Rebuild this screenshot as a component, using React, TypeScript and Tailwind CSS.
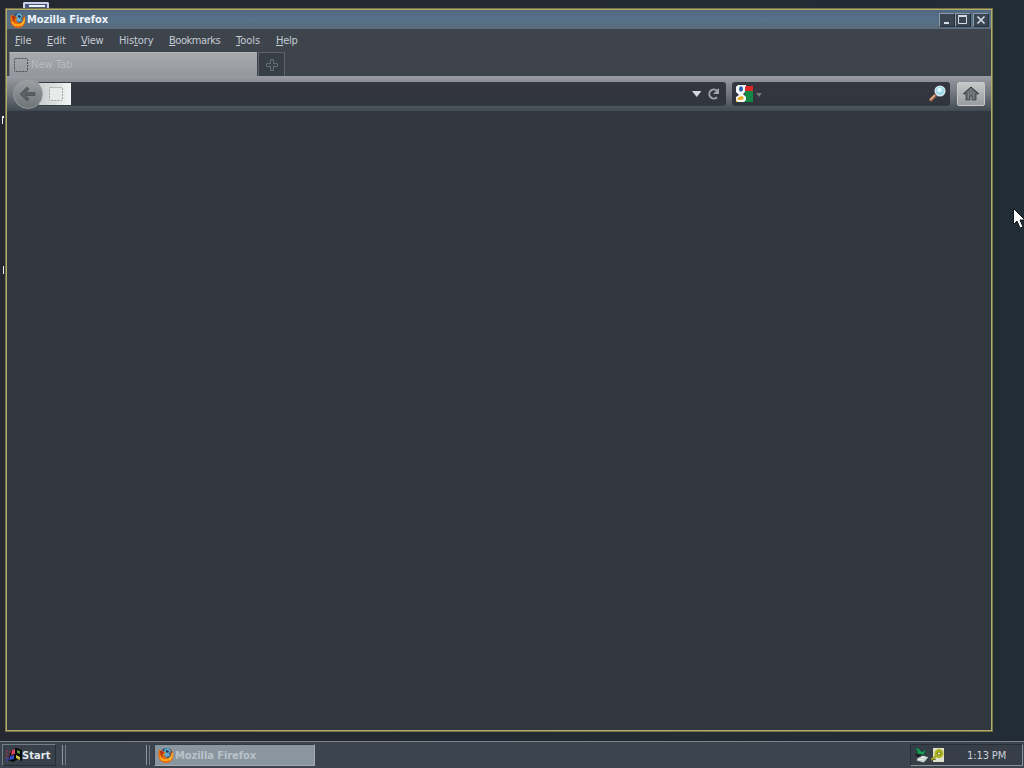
import type { ReactNode } from "react";

const MENUS = [
  { label: "File", width: "w-[32px]", spacing: "tracking-[0px]" },
  { label: "Edit", width: "w-[34px]", spacing: "tracking-[-0.1px]" },
  { label: "View", width: "w-[38px]", spacing: "tracking-[-0.3px]" },
  { label: "History", width: "w-[50px]", spacing: "tracking-[-0.1px]", key: 3 },
  { label: "Bookmarks", width: "w-[67px]", spacing: "tracking-[-0.45px]" },
  { label: "Tools", width: "w-[40px]", spacing: "tracking-[0px]" },
  { label: "Help", width: "w-[37px]", spacing: "tracking-[-0.3px]" },
];

function FirefoxIcon() {
  return (
    <svg viewBox="0 0 16 16" className="h-4 w-4 shrink-0">
      <circle cx="8.5" cy="7.3" r="6.4" fill="#245584" />
      <path d="M7 2 10 1l3 3-2 2 1 3-4 1-3-3z" fill="#65a9c8" />
      <path d="M8 3l3 1-1 2-2-1z" fill="#183958" />
      <path d="M1 2 2 4 4 3l2 2 2 .5L6 7l1 3 3 1 3-2-1-4 2 1-1-4c3 3 3 8 1 11-3 4-9 4-12 0C0 10 0 6 1 2z" fill="#e96b0c" />
      <path d="M2 8c1 4 4 5 6 4 3 0 4-1 5-4 0 5-3 6-6 6S1 12 2 8z" fill="#ffad24" />
      <path d="M2 4 4 4l2 2-2 1 1 3-2-1z" fill="#a92e12" />
      <path d="M14 5c2 5-1 8-4 9 3-3 4-5 4-9z" fill="#ffd53b" />
    </svg>
  );
}

function BlankPage({ light = false }: { light?: boolean }) {
  return (
    <svg viewBox="0 0 14 14" className="h-3.5 w-3.5 shrink-0">
      <rect x=".5" y=".5" width="13" height="13" rx="1" fill={light ? "#e8e9e9" : "none"} stroke={light ? "#a5a5a5" : "#4b4f54"} strokeDasharray="2 1" />
    </svg>
  );
}

function CaptionButton({ children, wide = false }: { children: ReactNode; wide?: boolean }) {
  return (
    <button className={`${wide ? "ml-0.5" : ""} flex h-[14px] w-4 items-center justify-center border border-t-[#8d9aa8] border-l-[#8d9aa8] border-r-[#26313c] border-b-[#26313c] bg-[#394552]`}>
      <svg viewBox="0 0 12 12" className="h-3 w-3 shrink-0" fill="none" stroke="#d3dce7">
        {children}
      </svg>
    </button>
  );
}

function TitleBar() {
  return (
    <header className="flex h-[19px] shrink-0 items-center bg-linear-to-b from-[#526882] via-[#557189] to-[#5b6b7b] pl-[3px] pr-[2px]">
      <FirefoxIcon />
      <span className="ml-px flex-1 pt-px text-[11px] leading-4 font-bold tracking-[-0.06px] text-[#edf2f8]">Mozilla Firefox</span>
      <CaptionButton><path d="M3 9h5" strokeWidth="2" /></CaptionButton>
      <CaptionButton><path d="M1.5 2.5h8v7h-8zM1 1.5h9" /></CaptionButton>
      <CaptionButton wide><path d="m2.5 2.5 7 7m0-7-7 7" strokeWidth="1.6" /></CaptionButton>
    </header>
  );
}

function MenuBar() {
  return (
    <nav className="flex h-[23px] shrink-0 items-center bg-[#3d444c] pt-[2px] pl-2 text-[11px] text-[#c5ccd5]">
      {MENUS.map(({ label, width, spacing, key = 0 }) => (
        <span key={label} className={`${width} ${spacing} shrink-0 whitespace-nowrap`}>
          {label.slice(0, key)}
          <span className="underline underline-offset-1">{label[key]}</span>
          {label.slice(key + 1)}
        </span>
      ))}
    </nav>
  );
}

function TabStrip() {
  return (
    <div className="flex h-6 shrink-0 bg-[#3c434b] pl-[2px]">
      <div className="flex h-6 w-[248px] items-center border-t border-l border-t-[#b4b6b9] border-l-[#777d82] bg-linear-to-b from-[#a8aaad] to-[#93979e] pl-1 text-[11px]">
        <BlankPage />
        <span className="ml-[3px] pt-[2px] text-[#b9bcc0]">New Tab</span>
      </div>
      <button className="ml-px flex h-6 w-[27px] items-center justify-center border border-b-0 border-[#5d636a] bg-[#373e45]">
        <svg viewBox="0 0 14 14" className="h-3.5 w-3.5" fill="none" stroke="#676f76">
          <path d="M5.5 1.5h3v4h4v3h-4v4h-3v-4h-4v-3h4z" />
          <path d="M7 3v8M3 7h8" stroke="#41484f" />
        </svg>
      </button>
    </div>
  );
}

function NavigationBar() {
  return (
    <div className="flex h-[35px] shrink-0 items-center bg-linear-to-b from-[#999ca2] via-[#72777d] to-[#414a52] pl-[6px] pr-[5px]">
      <button className="z-10 flex h-[30px] w-[30px] shrink-0 items-center justify-center rounded-full border border-[#96999c] bg-linear-to-b from-[#9da1a4] to-[#6e7377]">
        <svg viewBox="0 0 18 16" className="h-4 w-[18px]">
          <path d="m8 1 2 2-3 3.5h9v3H7L10 13l-2 2-7-7z" fill="#5a6065" stroke="#4d5358" strokeWidth=".8" />
        </svg>
      </button>
      <div className="-ml-[4px] flex h-[24px] w-[687px] shrink-0 items-center overflow-hidden rounded-r-[3px] border-y border-[#343a42] bg-linear-to-b from-[#343640] to-[#30353e]">
        <div className="flex h-[22px] w-8 items-center justify-center bg-linear-to-r from-[#c9cccd] to-[#f3f4f4] pl-px"><BlankPage light /></div>
        <svg viewBox="0 0 28 16" className="mt-px mr-[6px] ml-auto h-4 w-7">
          <path d="M0 5h9.5L4.75 11z" fill="#d4d8dc" />
          <path d="M25 11.2a4.5 4.5 0 1 1 0-6.4" fill="none" stroke="#a0a3aa" strokeWidth="2" />
          <path d="M27 2v6h-6z" fill="#a0a3aa" />
        </svg>
      </div>
      <div className="ml-[6px] flex h-[24px] w-[218px] shrink-0 items-center rounded-[3px] border-y border-[#343a42] bg-linear-to-b from-[#353640] to-[#30343d] pr-[3px] pl-[4px]">
        <svg viewBox="0 0 17 17" className="h-[17px] w-[17px]">
          <path d="M0 1h9v7H0z" fill="#2862ad" />
          <path d="M9 1h8v6H8z" fill="#dc2729" />
          <path d="M9 6h8v11H8z" fill="#138743" />
          <path d="M0 12h8v5H0z" fill="#e9ae1b" />
          <path d="M2 0h8v1L9 2v5L7 9l3 3v3l-2 2H2l-2-2v-3l3-2-1-1-2-2V2z" fill="#f6f8fa" />
          <ellipse cx="5" cy="4" rx="2" ry="2.7" fill="#285eaa" />
          <path d="m3 12 3-1 2 2-2 2H3l-2-1z" fill="#e8ab20" />
        </svg>
        <svg viewBox="0 0 6 4" className="mt-[2px] ml-[3px] h-1 w-1.5"><path d="M0 0h6L3 4z" fill="#72777c" /></svg>
        <svg viewBox="0 0 17 17" className="mr-px ml-auto h-[17px] w-[17px]">
          <path d="m7 10-6 6" stroke="#77534b" strokeWidth="3.5" />
          <path d="m6 10-5 5" stroke="#e6a17d" strokeWidth="2" />
          <circle cx="11" cy="6" r="4.8" fill="#9fd8e8" stroke="#d1e6ee" strokeWidth="1.5" />
          <circle cx="10.5" cy="5" r="2.2" fill="#e0f7fb" />
        </svg>
      </div>
      <button className="ml-[7px] flex h-6 w-[28px] shrink-0 items-center justify-center rounded-[2px] border border-[#c5c7c9] bg-linear-to-b from-[#c5c7c8] to-[#999d9f]">
        <svg viewBox="0 0 16 15" className="h-[15px] w-4">
          <path d="M1 8 8 1l7 7h-2v6H9v-4H7v4H3V8z" fill="#656b6e" stroke="#394146" strokeWidth=".8" />
          <path d="m0 8 8-7 8 7" fill="none" stroke="#343b3f" />
          <path d="M8 3v6M5.5 6v7M10.5 6v7" stroke="#858a8c" strokeWidth=".7" />
        </svg>
      </button>
    </div>
  );
}

function BrowserWindow() {
  return (
    <main className="mt-[8px] ml-[5px] flex h-[724px] w-[988px] shrink-0 flex-col border border-[#777347]">
      <div className="flex min-h-0 flex-1 flex-col border border-[#b1ac68] bg-[#30373f]">
        <TitleBar />
        <MenuBar />
        <TabStrip />
        <NavigationBar />
        <section className="flex-1 bg-[#30373f]" />
      </div>
    </main>
  );
}

function Grip() {
  return (
    <div className="flex h-[20px] gap-[2px]">
      <i className="w-px bg-[#8e969f]" />
      <i className="w-px bg-[#6f7982]" />
    </div>
  );
}

function Taskbar() {
  return (
    <footer className="mt-[9px] flex h-[27px] items-center border-t border-[#7b828b] bg-[#3c444d]">
      <button className="ml-[2px] flex h-[22px] w-[54px] items-center border border-t-[#747d87] border-r-[#262f37] border-b-[#262f37] border-l-[#747d87] bg-[#384049] pl-[2px]">
        <svg viewBox="0 0 17 16" className="h-4 w-[17px] shrink-0">
          <path d="m7 3 4-2 6 2v11l-4-2-5 3-5-2 2-7z" fill="#050709" />
          <path d="m7 3 3-1v5L6 8z" fill="#d7485a" />
          <path d="m12 3 3 1v3l-3-1z" fill="#59913d" />
          <path d="m5 9 4-1v4l-5 1z" fill="#334bc3" />
          <path d="m11 8 4 2v3l-4-2z" fill="#d2c540" />
          <path d="M1 4h2m1 1h2M1 7h2m1 1h1M0 10h2m1 1h1" stroke="#b7344e" />
          <path d="M1 12h3M1 14h2" stroke="#354ac2" />
        </svg>
        <span className="pt-px text-[11px] leading-4 font-bold tracking-[0.1px] text-[#e2e7ec]">Start</span>
      </button>
      <div className="ml-[6px]"><Grip /></div>
      <div className="ml-[80px]"><Grip /></div>
      <button className="ml-[4px] flex h-[22px] w-[161px] items-center border border-t-[#333c45] border-r-[#a1aab2] border-b-[#a1aab2] border-l-[#333c45] bg-[#8a969f] pl-[3px]">
        <FirefoxIcon />
        <span className="ml-px pt-[2px] text-[11px] font-bold tracking-[-0.06px] text-[#b9c2c9]">Mozilla Firefox</span>
      </button>
      <div className="mr-px ml-auto flex h-[22px] w-[113px] items-center border border-t-[#262f38] border-r-[#8a929a] border-b-[#8a929a] border-l-[#262f38] bg-[#373e48] pl-[2px] text-[11px] text-[#cbd2db]">
        <svg viewBox="0 0 17 17" className="h-[17px] w-[17px]">
          <path d="M2 1h3l4 4 4-3-2 6-5-1-5-3 4 1z" fill="#15a455" stroke="#173f36" strokeWidth=".7" />
          <path d="m2 7 6 1 6 1-5 2-6-2z" fill="#141d1c" />
          <path d="m4 11 6-3 6 2-5 6-8-2z" fill="#c5cdcc" stroke="#303e3e" />
          <path d="m5 12 6 1M8 10l5 1" stroke="#f1f6f3" />
        </svg>
        <svg viewBox="0 0 14 16" className="ml-px h-4 w-3.5">
          <path d="M2 1h11v14H2z" fill="#dedfcd" />
          <circle cx="8" cy="6.5" r="3.3" fill="#e3e5a6" stroke="#aeb519" strokeWidth="2.4" />
          <circle cx="8" cy="6.5" r="1.7" fill="none" stroke="#6a710f" />
          <path d="m5 9-5 4" fill="none" stroke="#a7a71d" strokeWidth="2.2" />
          <path d="m1 13 4-1" stroke="#5e6516" />
        </svg>
        <time className="ml-[22px] pt-[2px] whitespace-nowrap tracking-[-0.1px]">1:13 PM</time>
      </div>
    </footer>
  );
}

export default function App() {
  return (
    <div className="relative flex h-[768px] w-[1024px] flex-col overflow-hidden bg-linear-to-r from-[#252831] to-[#222c34] font-['DejaVu_Sans_Condensed','DejaVu_Sans',sans-serif] [font-stretch:condensed]">
      <div className="absolute top-[2px] left-[23px] h-[6px] w-[26px] rounded-t-[2px] border-2 border-b-0 border-[#cbd2e7] bg-[#48587a]"><div className="mt-px ml-1 h-0.5 w-4 bg-[#edf0f7]" /></div>
      <svg viewBox="0 0 3 8" className="absolute top-[116px] left-[2px] h-2 w-[3px]"><path d="M0 0h2v2H1v6H0z" fill="#f3f4f7" /></svg>
      <div className="absolute top-[266px] left-[3px] h-2 w-px bg-[#e9ebef]" />
      <BrowserWindow />
      <Taskbar />
      <svg viewBox="0 0 12 20" className="absolute top-[208px] left-[1013px] h-5 w-3">
        <path d="M.5.5v16L4 13l3 7 3-1-3-7h5z" fill="#fff" stroke="#11171d" />
      </svg>
    </div>
  );
}
